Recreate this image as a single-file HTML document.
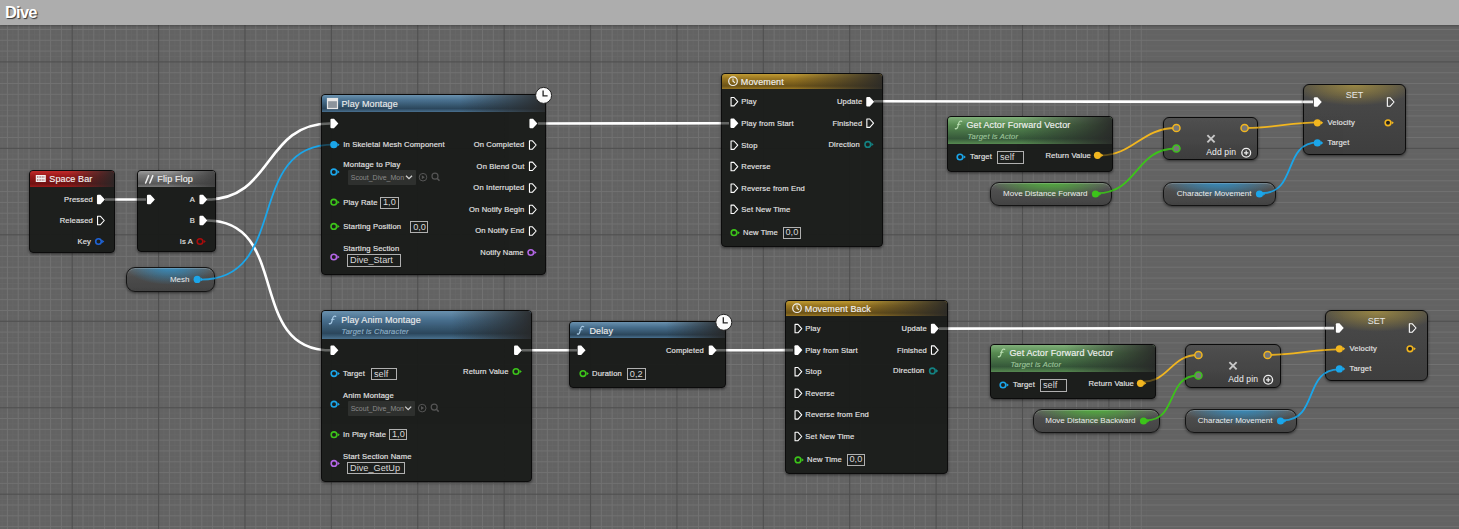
<!DOCTYPE html>
<html><head><meta charset="utf-8"><style>
*{margin:0;padding:0;box-sizing:border-box}
html,body{width:1459px;height:529px;overflow:hidden}
body{position:relative;background:#5c5c5c;font-family:"Liberation Sans", sans-serif;}
#bar{position:absolute;left:0;top:0;width:1459px;height:25px;background:#adadad;box-shadow:0 1px 2px rgba(0,0,0,0.25);}
#bar span{position:absolute;left:5px;top:3px;font-size:16.5px;font-weight:bold;color:#fff;text-shadow:1px 1px 1px #333;letter-spacing:-0.8px}
.node{position:absolute;border-radius:4px;background:rgba(27,29,27,0.97);border:1px solid #0c0c0c;box-shadow:0 1px 3px rgba(0,0,0,0.55);overflow:hidden}
.var{position:absolute;border-radius:9px;border:1px solid #141414;box-shadow:0 1px 3px rgba(0,0,0,0.55),inset 0 1px 0 rgba(255,255,255,0.18);overflow:hidden}
.cmp{border-radius:6px}
.hdr{position:absolute;left:0;top:0;right:0}
.t{position:absolute;white-space:nowrap;font-family:"Liberation Sans", sans-serif;line-height:1.15}
.box{position:absolute;border:1px solid #b0b0b0;color:#d8d8d8;padding-left:2px;white-space:nowrap;font-family:"Liberation Sans", sans-serif;overflow:hidden}
.drop{position:absolute;background:#2e302e;color:#8a8a8a;font-size:7px;padding-left:3px;white-space:nowrap;overflow:hidden;border-radius:1px}
svg{position:absolute;left:0;top:0}
</style></head><body>
<svg width="1459" height="529"><rect x="0" y="24" width="1459" height="505" fill="#636363"/><rect x="1.51" y="24" width="1" height="505" fill="#676767"/><rect x="12.31" y="24" width="1" height="505" fill="#676767"/><rect x="23.11" y="24" width="1" height="505" fill="#676767"/><rect x="33.90" y="24" width="1" height="505" fill="#676767"/><rect x="44.70" y="24" width="1" height="505" fill="#676767"/><rect x="55.50" y="24" width="1" height="505" fill="#676767"/><rect x="66.30" y="24" width="1" height="505" fill="#676767"/><rect x="77.10" y="24" width="1" height="505" fill="#676767"/><rect x="87.90" y="24" width="1" height="505" fill="#676767"/><rect x="98.70" y="24" width="1" height="505" fill="#676767"/><rect x="109.50" y="24" width="1" height="505" fill="#676767"/><rect x="120.29" y="24" width="1" height="505" fill="#676767"/><rect x="131.09" y="24" width="1" height="505" fill="#676767"/><rect x="141.89" y="24" width="1" height="505" fill="#676767"/><rect x="152.69" y="24" width="1" height="505" fill="#676767"/><rect x="163.49" y="24" width="1" height="505" fill="#676767"/><rect x="174.29" y="24" width="1" height="505" fill="#676767"/><rect x="185.09" y="24" width="1" height="505" fill="#676767"/><rect x="195.89" y="24" width="1" height="505" fill="#676767"/><rect x="206.68" y="24" width="1" height="505" fill="#676767"/><rect x="217.48" y="24" width="1" height="505" fill="#676767"/><rect x="228.28" y="24" width="1" height="505" fill="#676767"/><rect x="239.08" y="24" width="1" height="505" fill="#676767"/><rect x="249.88" y="24" width="1" height="505" fill="#676767"/><rect x="260.68" y="24" width="1" height="505" fill="#676767"/><rect x="271.48" y="24" width="1" height="505" fill="#676767"/><rect x="282.28" y="24" width="1" height="505" fill="#676767"/><rect x="293.07" y="24" width="1" height="505" fill="#676767"/><rect x="303.87" y="24" width="1" height="505" fill="#676767"/><rect x="314.67" y="24" width="1" height="505" fill="#676767"/><rect x="325.47" y="24" width="1" height="505" fill="#676767"/><rect x="336.27" y="24" width="1" height="505" fill="#676767"/><rect x="347.07" y="24" width="1" height="505" fill="#676767"/><rect x="357.87" y="24" width="1" height="505" fill="#676767"/><rect x="368.67" y="24" width="1" height="505" fill="#676767"/><rect x="379.46" y="24" width="1" height="505" fill="#676767"/><rect x="390.26" y="24" width="1" height="505" fill="#676767"/><rect x="401.06" y="24" width="1" height="505" fill="#676767"/><rect x="411.86" y="24" width="1" height="505" fill="#676767"/><rect x="422.66" y="24" width="1" height="505" fill="#676767"/><rect x="433.46" y="24" width="1" height="505" fill="#676767"/><rect x="444.26" y="24" width="1" height="505" fill="#676767"/><rect x="455.06" y="24" width="1" height="505" fill="#676767"/><rect x="465.85" y="24" width="1" height="505" fill="#676767"/><rect x="476.65" y="24" width="1" height="505" fill="#676767"/><rect x="487.45" y="24" width="1" height="505" fill="#676767"/><rect x="498.25" y="24" width="1" height="505" fill="#676767"/><rect x="509.05" y="24" width="1" height="505" fill="#676767"/><rect x="519.85" y="24" width="1" height="505" fill="#676767"/><rect x="530.65" y="24" width="1" height="505" fill="#676767"/><rect x="541.45" y="24" width="1" height="505" fill="#676767"/><rect x="552.24" y="24" width="1" height="505" fill="#676767"/><rect x="563.04" y="24" width="1" height="505" fill="#676767"/><rect x="573.84" y="24" width="1" height="505" fill="#676767"/><rect x="584.64" y="24" width="1" height="505" fill="#676767"/><rect x="595.44" y="24" width="1" height="505" fill="#676767"/><rect x="606.24" y="24" width="1" height="505" fill="#676767"/><rect x="617.04" y="24" width="1" height="505" fill="#676767"/><rect x="627.84" y="24" width="1" height="505" fill="#676767"/><rect x="638.63" y="24" width="1" height="505" fill="#676767"/><rect x="649.43" y="24" width="1" height="505" fill="#676767"/><rect x="660.23" y="24" width="1" height="505" fill="#676767"/><rect x="671.03" y="24" width="1" height="505" fill="#676767"/><rect x="681.83" y="24" width="1" height="505" fill="#676767"/><rect x="692.63" y="24" width="1" height="505" fill="#676767"/><rect x="703.43" y="24" width="1" height="505" fill="#676767"/><rect x="714.23" y="24" width="1" height="505" fill="#676767"/><rect x="725.02" y="24" width="1" height="505" fill="#676767"/><rect x="735.82" y="24" width="1" height="505" fill="#676767"/><rect x="746.62" y="24" width="1" height="505" fill="#676767"/><rect x="757.42" y="24" width="1" height="505" fill="#676767"/><rect x="768.22" y="24" width="1" height="505" fill="#676767"/><rect x="779.02" y="24" width="1" height="505" fill="#676767"/><rect x="789.82" y="24" width="1" height="505" fill="#676767"/><rect x="800.62" y="24" width="1" height="505" fill="#676767"/><rect x="811.41" y="24" width="1" height="505" fill="#676767"/><rect x="822.21" y="24" width="1" height="505" fill="#676767"/><rect x="833.01" y="24" width="1" height="505" fill="#676767"/><rect x="843.81" y="24" width="1" height="505" fill="#676767"/><rect x="854.61" y="24" width="1" height="505" fill="#676767"/><rect x="865.41" y="24" width="1" height="505" fill="#676767"/><rect x="876.21" y="24" width="1" height="505" fill="#676767"/><rect x="887.01" y="24" width="1" height="505" fill="#676767"/><rect x="897.80" y="24" width="1" height="505" fill="#676767"/><rect x="908.60" y="24" width="1" height="505" fill="#676767"/><rect x="919.40" y="24" width="1" height="505" fill="#676767"/><rect x="930.20" y="24" width="1" height="505" fill="#676767"/><rect x="941.00" y="24" width="1" height="505" fill="#676767"/><rect x="951.80" y="24" width="1" height="505" fill="#676767"/><rect x="962.60" y="24" width="1" height="505" fill="#676767"/><rect x="973.40" y="24" width="1" height="505" fill="#676767"/><rect x="984.19" y="24" width="1" height="505" fill="#676767"/><rect x="994.99" y="24" width="1" height="505" fill="#676767"/><rect x="1005.79" y="24" width="1" height="505" fill="#676767"/><rect x="1016.59" y="24" width="1" height="505" fill="#676767"/><rect x="1027.39" y="24" width="1" height="505" fill="#676767"/><rect x="1038.19" y="24" width="1" height="505" fill="#676767"/><rect x="1048.99" y="24" width="1" height="505" fill="#676767"/><rect x="1059.79" y="24" width="1" height="505" fill="#676767"/><rect x="1070.58" y="24" width="1" height="505" fill="#676767"/><rect x="1081.38" y="24" width="1" height="505" fill="#676767"/><rect x="1092.18" y="24" width="1" height="505" fill="#676767"/><rect x="1102.98" y="24" width="1" height="505" fill="#676767"/><rect x="1113.78" y="24" width="1" height="505" fill="#676767"/><rect x="1124.58" y="24" width="1" height="505" fill="#676767"/><rect x="1135.38" y="24" width="1" height="505" fill="#676767"/><rect x="1146.18" y="24" width="1" height="505" fill="#676767"/><rect x="0" y="23.57" width="1459" height="1" fill="#676767"/><rect x="0" y="34.38" width="1459" height="1" fill="#676767"/><rect x="0" y="45.19" width="1459" height="1" fill="#676767"/><rect x="0" y="56.00" width="1459" height="1" fill="#676767"/><rect x="0" y="66.80" width="1459" height="1" fill="#676767"/><rect x="0" y="77.61" width="1459" height="1" fill="#676767"/><rect x="0" y="88.42" width="1459" height="1" fill="#676767"/><rect x="0" y="99.23" width="1459" height="1" fill="#676767"/><rect x="0" y="110.03" width="1459" height="1" fill="#676767"/><rect x="0" y="120.84" width="1459" height="1" fill="#676767"/><rect x="0" y="131.65" width="1459" height="1" fill="#676767"/><rect x="0" y="142.46" width="1459" height="1" fill="#676767"/><rect x="0" y="153.26" width="1459" height="1" fill="#676767"/><rect x="0" y="164.07" width="1459" height="1" fill="#676767"/><rect x="0" y="174.88" width="1459" height="1" fill="#676767"/><rect x="0" y="185.69" width="1459" height="1" fill="#676767"/><rect x="0" y="196.49" width="1459" height="1" fill="#676767"/><rect x="0" y="207.30" width="1459" height="1" fill="#676767"/><rect x="0" y="218.11" width="1459" height="1" fill="#676767"/><rect x="0" y="228.92" width="1459" height="1" fill="#676767"/><rect x="0" y="239.72" width="1459" height="1" fill="#676767"/><rect x="0" y="250.53" width="1459" height="1" fill="#676767"/><rect x="0" y="261.34" width="1459" height="1" fill="#676767"/><rect x="0" y="272.15" width="1459" height="1" fill="#676767"/><rect x="0" y="282.95" width="1459" height="1" fill="#676767"/><rect x="0" y="293.76" width="1459" height="1" fill="#676767"/><rect x="0" y="304.57" width="1459" height="1" fill="#676767"/><rect x="0" y="315.38" width="1459" height="1" fill="#676767"/><rect x="0" y="326.18" width="1459" height="1" fill="#676767"/><rect x="0" y="336.99" width="1459" height="1" fill="#676767"/><rect x="0" y="347.80" width="1459" height="1" fill="#676767"/><rect x="0" y="358.61" width="1459" height="1" fill="#676767"/><rect x="0" y="369.41" width="1459" height="1" fill="#676767"/><rect x="0" y="380.22" width="1459" height="1" fill="#676767"/><rect x="0" y="391.03" width="1459" height="1" fill="#676767"/><rect x="0" y="401.84" width="1459" height="1" fill="#676767"/><rect x="0" y="412.64" width="1459" height="1" fill="#676767"/><rect x="0" y="423.45" width="1459" height="1" fill="#676767"/><rect x="0" y="434.26" width="1459" height="1" fill="#676767"/><rect x="0" y="445.07" width="1459" height="1" fill="#676767"/><rect x="0" y="455.87" width="1459" height="1" fill="#676767"/><rect x="0" y="466.68" width="1459" height="1" fill="#676767"/><rect x="0" y="477.49" width="1459" height="1" fill="#676767"/><rect x="0" y="488.30" width="1459" height="1" fill="#676767"/><rect x="0" y="499.10" width="1459" height="1" fill="#676767"/><rect x="0" y="509.91" width="1459" height="1" fill="#676767"/><rect x="0" y="520.72" width="1459" height="1" fill="#676767"/><rect x="6.91" y="24" width="1" height="505" fill="#727272"/><rect x="17.71" y="24" width="1" height="505" fill="#727272"/><rect x="28.51" y="24" width="1" height="505" fill="#727272"/><rect x="39.30" y="24" width="1" height="505" fill="#727272"/><rect x="50.10" y="24" width="1" height="505" fill="#727272"/><rect x="60.90" y="24" width="1" height="505" fill="#727272"/><rect x="82.50" y="24" width="1" height="505" fill="#727272"/><rect x="93.30" y="24" width="1" height="505" fill="#727272"/><rect x="104.10" y="24" width="1" height="505" fill="#727272"/><rect x="114.90" y="24" width="1" height="505" fill="#727272"/><rect x="125.69" y="24" width="1" height="505" fill="#727272"/><rect x="136.49" y="24" width="1" height="505" fill="#727272"/><rect x="147.29" y="24" width="1" height="505" fill="#727272"/><rect x="168.89" y="24" width="1" height="505" fill="#727272"/><rect x="179.69" y="24" width="1" height="505" fill="#727272"/><rect x="190.49" y="24" width="1" height="505" fill="#727272"/><rect x="201.29" y="24" width="1" height="505" fill="#727272"/><rect x="212.08" y="24" width="1" height="505" fill="#727272"/><rect x="222.88" y="24" width="1" height="505" fill="#727272"/><rect x="233.68" y="24" width="1" height="505" fill="#727272"/><rect x="255.28" y="24" width="1" height="505" fill="#727272"/><rect x="266.08" y="24" width="1" height="505" fill="#727272"/><rect x="276.88" y="24" width="1" height="505" fill="#727272"/><rect x="287.68" y="24" width="1" height="505" fill="#727272"/><rect x="298.47" y="24" width="1" height="505" fill="#727272"/><rect x="309.27" y="24" width="1" height="505" fill="#727272"/><rect x="320.07" y="24" width="1" height="505" fill="#727272"/><rect x="341.67" y="24" width="1" height="505" fill="#727272"/><rect x="352.47" y="24" width="1" height="505" fill="#727272"/><rect x="363.27" y="24" width="1" height="505" fill="#727272"/><rect x="374.06" y="24" width="1" height="505" fill="#727272"/><rect x="384.86" y="24" width="1" height="505" fill="#727272"/><rect x="395.66" y="24" width="1" height="505" fill="#727272"/><rect x="406.46" y="24" width="1" height="505" fill="#727272"/><rect x="428.06" y="24" width="1" height="505" fill="#727272"/><rect x="438.86" y="24" width="1" height="505" fill="#727272"/><rect x="449.66" y="24" width="1" height="505" fill="#727272"/><rect x="460.45" y="24" width="1" height="505" fill="#727272"/><rect x="471.25" y="24" width="1" height="505" fill="#727272"/><rect x="482.05" y="24" width="1" height="505" fill="#727272"/><rect x="492.85" y="24" width="1" height="505" fill="#727272"/><rect x="514.45" y="24" width="1" height="505" fill="#727272"/><rect x="525.25" y="24" width="1" height="505" fill="#727272"/><rect x="536.05" y="24" width="1" height="505" fill="#727272"/><rect x="546.85" y="24" width="1" height="505" fill="#727272"/><rect x="557.64" y="24" width="1" height="505" fill="#727272"/><rect x="568.44" y="24" width="1" height="505" fill="#727272"/><rect x="579.24" y="24" width="1" height="505" fill="#727272"/><rect x="600.84" y="24" width="1" height="505" fill="#727272"/><rect x="611.64" y="24" width="1" height="505" fill="#727272"/><rect x="622.44" y="24" width="1" height="505" fill="#727272"/><rect x="633.24" y="24" width="1" height="505" fill="#727272"/><rect x="644.03" y="24" width="1" height="505" fill="#727272"/><rect x="654.83" y="24" width="1" height="505" fill="#727272"/><rect x="665.63" y="24" width="1" height="505" fill="#727272"/><rect x="687.23" y="24" width="1" height="505" fill="#727272"/><rect x="698.03" y="24" width="1" height="505" fill="#727272"/><rect x="708.83" y="24" width="1" height="505" fill="#727272"/><rect x="719.62" y="24" width="1" height="505" fill="#727272"/><rect x="730.42" y="24" width="1" height="505" fill="#727272"/><rect x="741.22" y="24" width="1" height="505" fill="#727272"/><rect x="752.02" y="24" width="1" height="505" fill="#727272"/><rect x="773.62" y="24" width="1" height="505" fill="#727272"/><rect x="784.42" y="24" width="1" height="505" fill="#727272"/><rect x="795.22" y="24" width="1" height="505" fill="#727272"/><rect x="806.02" y="24" width="1" height="505" fill="#727272"/><rect x="816.81" y="24" width="1" height="505" fill="#727272"/><rect x="827.61" y="24" width="1" height="505" fill="#727272"/><rect x="838.41" y="24" width="1" height="505" fill="#727272"/><rect x="860.01" y="24" width="1" height="505" fill="#727272"/><rect x="870.81" y="24" width="1" height="505" fill="#727272"/><rect x="881.61" y="24" width="1" height="505" fill="#727272"/><rect x="892.41" y="24" width="1" height="505" fill="#727272"/><rect x="903.20" y="24" width="1" height="505" fill="#727272"/><rect x="914.00" y="24" width="1" height="505" fill="#727272"/><rect x="924.80" y="24" width="1" height="505" fill="#727272"/><rect x="946.40" y="24" width="1" height="505" fill="#727272"/><rect x="957.20" y="24" width="1" height="505" fill="#727272"/><rect x="968.00" y="24" width="1" height="505" fill="#727272"/><rect x="978.80" y="24" width="1" height="505" fill="#727272"/><rect x="989.59" y="24" width="1" height="505" fill="#727272"/><rect x="1000.39" y="24" width="1" height="505" fill="#727272"/><rect x="1011.19" y="24" width="1" height="505" fill="#727272"/><rect x="1032.79" y="24" width="1" height="505" fill="#727272"/><rect x="1043.59" y="24" width="1" height="505" fill="#727272"/><rect x="1054.39" y="24" width="1" height="505" fill="#727272"/><rect x="1065.18" y="24" width="1" height="505" fill="#727272"/><rect x="1075.98" y="24" width="1" height="505" fill="#727272"/><rect x="1086.78" y="24" width="1" height="505" fill="#727272"/><rect x="1097.58" y="24" width="1" height="505" fill="#727272"/><rect x="1119.18" y="24" width="1" height="505" fill="#727272"/><rect x="1129.98" y="24" width="1" height="505" fill="#727272"/><rect x="1140.78" y="24" width="1" height="505" fill="#727272"/><rect x="0" y="28.98" width="1459" height="1" fill="#727272"/><rect x="0" y="39.78" width="1459" height="1" fill="#727272"/><rect x="0" y="50.59" width="1459" height="1" fill="#727272"/><rect x="0" y="72.21" width="1459" height="1" fill="#727272"/><rect x="0" y="83.02" width="1459" height="1" fill="#727272"/><rect x="0" y="93.82" width="1459" height="1" fill="#727272"/><rect x="0" y="104.63" width="1459" height="1" fill="#727272"/><rect x="0" y="115.44" width="1459" height="1" fill="#727272"/><rect x="0" y="126.25" width="1459" height="1" fill="#727272"/><rect x="0" y="137.05" width="1459" height="1" fill="#727272"/><rect x="0" y="158.67" width="1459" height="1" fill="#727272"/><rect x="0" y="169.47" width="1459" height="1" fill="#727272"/><rect x="0" y="180.28" width="1459" height="1" fill="#727272"/><rect x="0" y="191.09" width="1459" height="1" fill="#727272"/><rect x="0" y="201.90" width="1459" height="1" fill="#727272"/><rect x="0" y="212.70" width="1459" height="1" fill="#727272"/><rect x="0" y="223.51" width="1459" height="1" fill="#727272"/><rect x="0" y="245.13" width="1459" height="1" fill="#727272"/><rect x="0" y="255.94" width="1459" height="1" fill="#727272"/><rect x="0" y="266.74" width="1459" height="1" fill="#727272"/><rect x="0" y="277.55" width="1459" height="1" fill="#727272"/><rect x="0" y="288.36" width="1459" height="1" fill="#727272"/><rect x="0" y="299.16" width="1459" height="1" fill="#727272"/><rect x="0" y="309.97" width="1459" height="1" fill="#727272"/><rect x="0" y="331.59" width="1459" height="1" fill="#727272"/><rect x="0" y="342.39" width="1459" height="1" fill="#727272"/><rect x="0" y="353.20" width="1459" height="1" fill="#727272"/><rect x="0" y="364.01" width="1459" height="1" fill="#727272"/><rect x="0" y="374.82" width="1459" height="1" fill="#727272"/><rect x="0" y="385.62" width="1459" height="1" fill="#727272"/><rect x="0" y="396.43" width="1459" height="1" fill="#727272"/><rect x="0" y="418.05" width="1459" height="1" fill="#727272"/><rect x="0" y="428.85" width="1459" height="1" fill="#727272"/><rect x="0" y="439.66" width="1459" height="1" fill="#727272"/><rect x="0" y="450.47" width="1459" height="1" fill="#727272"/><rect x="0" y="461.28" width="1459" height="1" fill="#727272"/><rect x="0" y="472.08" width="1459" height="1" fill="#727272"/><rect x="0" y="482.89" width="1459" height="1" fill="#727272"/><rect x="0" y="504.51" width="1459" height="1" fill="#727272"/><rect x="0" y="515.31" width="1459" height="1" fill="#727272"/><rect x="0" y="526.12" width="1459" height="1" fill="#727272"/><rect x="71.65" y="24" width="1.1" height="505" fill="#505050"/><rect x="158.04" y="24" width="1.1" height="505" fill="#505050"/><rect x="244.43" y="24" width="1.1" height="505" fill="#505050"/><rect x="330.82" y="24" width="1.1" height="505" fill="#505050"/><rect x="417.21" y="24" width="1.1" height="505" fill="#505050"/><rect x="503.60" y="24" width="1.1" height="505" fill="#505050"/><rect x="589.99" y="24" width="1.1" height="505" fill="#505050"/><rect x="676.38" y="24" width="1.1" height="505" fill="#505050"/><rect x="762.77" y="24" width="1.1" height="505" fill="#505050"/><rect x="849.16" y="24" width="1.1" height="505" fill="#505050"/><rect x="935.55" y="24" width="1.1" height="505" fill="#505050"/><rect x="1021.94" y="24" width="1.1" height="505" fill="#505050"/><rect x="1108.33" y="24" width="1.1" height="505" fill="#505050"/><rect x="0" y="61.35" width="1459" height="1.1" fill="#505050"/><rect x="0" y="147.81" width="1459" height="1.1" fill="#505050"/><rect x="0" y="234.27" width="1459" height="1.1" fill="#505050"/><rect x="0" y="320.73" width="1459" height="1.1" fill="#505050"/><rect x="0" y="407.19" width="1459" height="1.1" fill="#505050"/><rect x="0" y="493.65" width="1459" height="1.1" fill="#505050"/></svg>
<div id="bar"><span>Dive</span></div>
<svg width="1459" height="529"><path d="M105 199.5 C118.66666666666667 199.5 132.33333333333334 199.5 146 199.5" stroke="#ffffff" stroke-width="2.6" fill="none"/><path d="M207 199.5 C273.3333333333333 199.5 263.6666666666667 123.5 330 123.5" stroke="#ffffff" stroke-width="2.6" fill="none"/><path d="M207 220.5 C291.26666666666665 220.5 245.73333333333335 350.3 330 350.3" stroke="#ffffff" stroke-width="2.6" fill="none"/><path d="M538 123.5 C601.7666666666667 123.5 665.2333333333333 123.2 729 123.2" stroke="#ffffff" stroke-width="2.6" fill="none"/><path d="M522 350.3 C540.3333333333334 350.3 558.6666666666666 350.3 577 350.3" stroke="#ffffff" stroke-width="2.6" fill="none"/><path d="M716 350.3 C741.7333333333333 350.3 767.2666666666667 350.1 793 350.1" stroke="#ffffff" stroke-width="2.6" fill="none"/><path d="M874 101.3 C1020.5333333333333 101.3 1166.4666666666667 101.9 1313 101.9" stroke="#ffffff" stroke-width="2.6" fill="none"/><path d="M939 328.6 C1070.8333333333333 328.6 1202.1666666666667 328.1 1334 328.1" stroke="#ffffff" stroke-width="2.6" fill="none"/><path d="M201 279.6 C289.9666666666667 279.6 244.0333333333333 144.7 333 144.7" stroke="#1ba6ea" stroke-width="1.8" fill="none"/><path d="M1099 155.6 C1133.8666666666666 155.6 1141.1333333333334 128 1176 128" stroke="#f2b61f" stroke-width="1.8" fill="none"/><path d="M1097 193.2 C1138.2333333333333 193.2 1134.7666666666667 148.5 1176 148.5" stroke="#3cc41a" stroke-width="1.8" fill="none"/><path d="M1247 128 C1272.5666666666666 128 1292.4333333333334 122.3 1318 122.3" stroke="#f2b61f" stroke-width="1.8" fill="none"/><path d="M1262 193.2 C1297.6 193.2 1282.4 142.4 1318 142.4" stroke="#1ba6ea" stroke-width="1.8" fill="none"/><path d="M1142 381.8 C1169.6 381.8 1170.4 355 1198 355" stroke="#f2b61f" stroke-width="1.8" fill="none"/><path d="M1146 420.4 C1178.3 420.4 1165.7 375.5 1198 375.5" stroke="#3cc41a" stroke-width="1.8" fill="none"/><path d="M1268 355 C1293.5666666666666 355 1313.4333333333334 349.3 1339 349.3" stroke="#f2b61f" stroke-width="1.8" fill="none"/><path d="M1283 420.4 C1318.6666666666667 420.4 1303.3333333333333 369.4 1339 369.4" stroke="#1ba6ea" stroke-width="1.8" fill="none"/></svg>
<div class="node" style="left:29px;top:170px;width:86px;height:83px;"><div class="hdr" style="height:16px;background:linear-gradient(90deg,rgba(40,40,40,0) 45%,rgba(40,40,40,0.92) 100%),linear-gradient(180deg,#c22a2a 0%,#9c1a1a 30%,#6e1212 80%,#9c1a1a 100%);"></div></div><div class="node" style="left:137px;top:170px;width:79px;height:82px;"><div class="hdr" style="height:16px;background:linear-gradient(90deg,rgba(40,40,40,0) 40%,rgba(60,60,60,0.85) 100%),linear-gradient(180deg,#9a9a9a 0%,#7a7a7a 30%,#585858 80%,#7a7a7a 100%);"></div></div><div class="var" style="left:126px;top:267px;width:89px;height:25px;background:radial-gradient(ellipse 58% 95% at 50% -12%,rgba(45,150,210,0.7) 0%,rgba(45,150,210,0.7) 20%,rgba(0,0,0,0) 90%),linear-gradient(180deg,#626262 0%,#4e4e4e 35%,#434343 100%);"></div><div class="node" style="left:321px;top:94px;width:225px;height:181px;"><div class="hdr" style="height:17px;background:linear-gradient(90deg,rgba(40,40,40,0) 62%,rgba(40,40,40,0.92) 100%),linear-gradient(180deg,#6a91ae 0%,#4a7190 30%,#2c475c 80%,#4a7190 100%);"></div></div><div class="node" style="left:321px;top:310px;width:211px;height:172px;"><div class="hdr" style="height:27.5px;background:linear-gradient(90deg,rgba(40,40,40,0) 62%,rgba(40,40,40,0.92) 100%),linear-gradient(180deg,#6a91ae 0%,#4a7190 30%,#2c475c 80%,#4a7190 100%);"></div></div><div class="node" style="left:569px;top:321px;width:157px;height:67px;"><div class="hdr" style="height:15.8px;background:linear-gradient(90deg,rgba(40,40,40,0) 62%,rgba(40,40,40,0.92) 100%),linear-gradient(180deg,#6a91ae 0%,#4a7190 30%,#2c475c 80%,#4a7190 100%);"></div></div><div class="node" style="left:721px;top:73px;width:162px;height:174px;"><div class="hdr" style="height:15px;background:linear-gradient(90deg,rgba(40,40,40,0) 45%,rgba(40,40,40,0.92) 100%),linear-gradient(180deg,#bf9a32 0%,#9a7722 30%,#6c5318 80%,#9a7722 100%);"></div></div><div class="node" style="left:785px;top:300px;width:163px;height:174px;"><div class="hdr" style="height:15px;background:linear-gradient(90deg,rgba(40,40,40,0) 45%,rgba(40,40,40,0.92) 100%),linear-gradient(180deg,#bf9a32 0%,#9a7722 30%,#6c5318 80%,#9a7722 100%);"></div></div><div class="node" style="left:947px;top:116px;width:166px;height:56px;"><div class="hdr" style="height:27px;background:linear-gradient(90deg,rgba(40,40,40,0) 45%,rgba(40,40,40,0.92) 100%),linear-gradient(180deg,#80b07a 0%,#578a51 30%,#36583a 80%,#578a51 100%);"></div></div><div class="node cmp" style="left:1163px;top:117px;width:95px;height:43px;background:linear-gradient(180deg,#505050 0%,#3e3e3e 100%);"></div><div class="node cmp" style="left:1303px;top:84px;width:103px;height:71px;background:radial-gradient(ellipse 62% 30% at 50% 0%,rgba(205,175,65,0.6) 0%,rgba(190,160,55,0.32) 55%,rgba(0,0,0,0) 100%),linear-gradient(180deg,#4a4a4a 0%,#3e3e3e 100%);"></div><div class="var" style="left:990px;top:182px;width:122px;height:24px;background:radial-gradient(ellipse 58% 95% at 50% -12%,rgba(80,190,55,0.7) 0%,rgba(80,190,55,0.7) 20%,rgba(0,0,0,0) 90%),linear-gradient(180deg,#626262 0%,#4e4e4e 35%,#434343 100%);"></div><div class="var" style="left:1163px;top:182px;width:113px;height:24px;background:radial-gradient(ellipse 58% 95% at 50% -12%,rgba(45,150,210,0.7) 0%,rgba(45,150,210,0.7) 20%,rgba(0,0,0,0) 90%),linear-gradient(180deg,#626262 0%,#4e4e4e 35%,#434343 100%);"></div><div class="node" style="left:990px;top:344px;width:166px;height:55px;"><div class="hdr" style="height:27px;background:linear-gradient(90deg,rgba(40,40,40,0) 45%,rgba(40,40,40,0.92) 100%),linear-gradient(180deg,#80b07a 0%,#578a51 30%,#36583a 80%,#578a51 100%);"></div></div><div class="node cmp" style="left:1185px;top:344px;width:96px;height:44px;background:linear-gradient(180deg,#505050 0%,#3e3e3e 100%);"></div><div class="node cmp" style="left:1325px;top:310px;width:103px;height:71px;background:radial-gradient(ellipse 62% 30% at 50% 0%,rgba(205,175,65,0.6) 0%,rgba(190,160,55,0.32) 55%,rgba(0,0,0,0) 100%),linear-gradient(180deg,#4a4a4a 0%,#3e3e3e 100%);"></div><div class="var" style="left:1033px;top:409px;width:127px;height:24px;background:radial-gradient(ellipse 58% 95% at 50% -12%,rgba(80,190,55,0.7) 0%,rgba(80,190,55,0.7) 20%,rgba(0,0,0,0) 90%),linear-gradient(180deg,#626262 0%,#4e4e4e 35%,#434343 100%);"></div><div class="var" style="left:1185px;top:409px;width:112px;height:24px;background:radial-gradient(ellipse 58% 95% at 50% -12%,rgba(45,150,210,0.7) 0%,rgba(45,150,210,0.7) 20%,rgba(0,0,0,0) 90%),linear-gradient(180deg,#626262 0%,#4e4e4e 35%,#434343 100%);"></div>
<svg width="1459" height="529"><defs><clipPath id="cc"><rect x="126" y="267" width="89" height="25"/><rect x="1163" y="117" width="95" height="43"/><rect x="1303" y="84" width="103" height="71"/><rect x="990" y="182" width="122" height="24"/><rect x="1163" y="182" width="113" height="24"/><rect x="1185" y="344" width="96" height="44"/><rect x="1325" y="310" width="103" height="71"/><rect x="1033" y="409" width="127" height="24"/><rect x="1185" y="409" width="112" height="24"/></clipPath><clipPath id="cd"><rect x="29" y="170" width="86" height="83"/><rect x="137" y="170" width="79" height="82"/><rect x="321" y="94" width="225" height="181"/><rect x="321" y="310" width="211" height="172"/><rect x="569" y="321" width="157" height="67"/><rect x="721" y="73" width="162" height="174"/><rect x="785" y="300" width="163" height="174"/><rect x="947" y="116" width="166" height="56"/><rect x="990" y="344" width="166" height="55"/></clipPath></defs><g clip-path="url(#cc)" opacity="0.9"><path d="M105 199.5 C118.66666666666667 199.5 132.33333333333334 199.5 146 199.5" stroke="#ffffff" stroke-width="2.6" fill="none"/><path d="M207 199.5 C273.3333333333333 199.5 263.6666666666667 123.5 330 123.5" stroke="#ffffff" stroke-width="2.6" fill="none"/><path d="M207 220.5 C291.26666666666665 220.5 245.73333333333335 350.3 330 350.3" stroke="#ffffff" stroke-width="2.6" fill="none"/><path d="M538 123.5 C601.7666666666667 123.5 665.2333333333333 123.2 729 123.2" stroke="#ffffff" stroke-width="2.6" fill="none"/><path d="M522 350.3 C540.3333333333334 350.3 558.6666666666666 350.3 577 350.3" stroke="#ffffff" stroke-width="2.6" fill="none"/><path d="M716 350.3 C741.7333333333333 350.3 767.2666666666667 350.1 793 350.1" stroke="#ffffff" stroke-width="2.6" fill="none"/><path d="M874 101.3 C1020.5333333333333 101.3 1166.4666666666667 101.9 1313 101.9" stroke="#ffffff" stroke-width="2.6" fill="none"/><path d="M939 328.6 C1070.8333333333333 328.6 1202.1666666666667 328.1 1334 328.1" stroke="#ffffff" stroke-width="2.6" fill="none"/><path d="M201 279.6 C289.9666666666667 279.6 244.0333333333333 144.7 333 144.7" stroke="#1ba6ea" stroke-width="1.8" fill="none"/><path d="M1099 155.6 C1133.8666666666666 155.6 1141.1333333333334 128 1176 128" stroke="#f2b61f" stroke-width="1.8" fill="none"/><path d="M1097 193.2 C1138.2333333333333 193.2 1134.7666666666667 148.5 1176 148.5" stroke="#3cc41a" stroke-width="1.8" fill="none"/><path d="M1247 128 C1272.5666666666666 128 1292.4333333333334 122.3 1318 122.3" stroke="#f2b61f" stroke-width="1.8" fill="none"/><path d="M1262 193.2 C1297.6 193.2 1282.4 142.4 1318 142.4" stroke="#1ba6ea" stroke-width="1.8" fill="none"/><path d="M1142 381.8 C1169.6 381.8 1170.4 355 1198 355" stroke="#f2b61f" stroke-width="1.8" fill="none"/><path d="M1146 420.4 C1178.3 420.4 1165.7 375.5 1198 375.5" stroke="#3cc41a" stroke-width="1.8" fill="none"/><path d="M1268 355 C1293.5666666666666 355 1313.4333333333334 349.3 1339 349.3" stroke="#f2b61f" stroke-width="1.8" fill="none"/><path d="M1283 420.4 C1318.6666666666667 420.4 1303.3333333333333 369.4 1339 369.4" stroke="#1ba6ea" stroke-width="1.8" fill="none"/></g><g clip-path="url(#cd)" opacity="0.3"><path d="M105 199.5 C118.66666666666667 199.5 132.33333333333334 199.5 146 199.5" stroke="#ffffff" stroke-width="2.6" fill="none"/><path d="M207 199.5 C273.3333333333333 199.5 263.6666666666667 123.5 330 123.5" stroke="#ffffff" stroke-width="2.6" fill="none"/><path d="M207 220.5 C291.26666666666665 220.5 245.73333333333335 350.3 330 350.3" stroke="#ffffff" stroke-width="2.6" fill="none"/><path d="M538 123.5 C601.7666666666667 123.5 665.2333333333333 123.2 729 123.2" stroke="#ffffff" stroke-width="2.6" fill="none"/><path d="M522 350.3 C540.3333333333334 350.3 558.6666666666666 350.3 577 350.3" stroke="#ffffff" stroke-width="2.6" fill="none"/><path d="M716 350.3 C741.7333333333333 350.3 767.2666666666667 350.1 793 350.1" stroke="#ffffff" stroke-width="2.6" fill="none"/><path d="M874 101.3 C1020.5333333333333 101.3 1166.4666666666667 101.9 1313 101.9" stroke="#ffffff" stroke-width="2.6" fill="none"/><path d="M939 328.6 C1070.8333333333333 328.6 1202.1666666666667 328.1 1334 328.1" stroke="#ffffff" stroke-width="2.6" fill="none"/><path d="M201 279.6 C289.9666666666667 279.6 244.0333333333333 144.7 333 144.7" stroke="#1ba6ea" stroke-width="1.8" fill="none"/><path d="M1099 155.6 C1133.8666666666666 155.6 1141.1333333333334 128 1176 128" stroke="#f2b61f" stroke-width="1.8" fill="none"/><path d="M1097 193.2 C1138.2333333333333 193.2 1134.7666666666667 148.5 1176 148.5" stroke="#3cc41a" stroke-width="1.8" fill="none"/><path d="M1247 128 C1272.5666666666666 128 1292.4333333333334 122.3 1318 122.3" stroke="#f2b61f" stroke-width="1.8" fill="none"/><path d="M1262 193.2 C1297.6 193.2 1282.4 142.4 1318 142.4" stroke="#1ba6ea" stroke-width="1.8" fill="none"/><path d="M1142 381.8 C1169.6 381.8 1170.4 355 1198 355" stroke="#f2b61f" stroke-width="1.8" fill="none"/><path d="M1146 420.4 C1178.3 420.4 1165.7 375.5 1198 375.5" stroke="#3cc41a" stroke-width="1.8" fill="none"/><path d="M1268 355 C1293.5666666666666 355 1313.4333333333334 349.3 1339 349.3" stroke="#f2b61f" stroke-width="1.8" fill="none"/><path d="M1283 420.4 C1318.6666666666667 420.4 1303.3333333333333 369.4 1339 369.4" stroke="#1ba6ea" stroke-width="1.8" fill="none"/></g></svg>
<div class="t" style="left:49.3px;top:173.9px;font-size:9.0px;color:#f2f2f2;font-weight:normal;letter-spacing:0.12px;-webkit-text-stroke:0.15px currentColor;">Space Bar</div><div class="t" style="right:1366.0px;top:195.9px;font-size:7.6px;color:#e4e4e4;font-weight:normal;letter-spacing:0.15px;-webkit-text-stroke:0.15px currentColor;">Pressed</div><div class="t" style="right:1366.0px;top:216.9px;font-size:7.6px;color:#e4e4e4;font-weight:normal;letter-spacing:0.15px;-webkit-text-stroke:0.15px currentColor;">Released</div><div class="t" style="right:1368.0px;top:237.9px;font-size:7.6px;color:#e4e4e4;font-weight:normal;letter-spacing:0.15px;-webkit-text-stroke:0.15px currentColor;">Key</div><div class="t" style="left:157.3px;top:173.9px;font-size:9.0px;color:#f0f0f0;font-weight:normal;letter-spacing:0.12px;-webkit-text-stroke:0.15px currentColor;">Flip Flop</div><div class="t" style="right:1264.0px;top:195.9px;font-size:7.6px;color:#e4e4e4;font-weight:normal;letter-spacing:0.15px;-webkit-text-stroke:0.15px currentColor;">A</div><div class="t" style="right:1264.0px;top:216.9px;font-size:7.6px;color:#e4e4e4;font-weight:normal;letter-spacing:0.15px;-webkit-text-stroke:0.15px currentColor;">B</div><div class="t" style="right:1266.0px;top:237.9px;font-size:7.6px;color:#e4e4e4;font-weight:normal;letter-spacing:0.15px;-webkit-text-stroke:0.15px currentColor;">Is A</div><div class="t" style="right:1269.5px;top:275.4px;font-size:8px;color:#ececec;font-weight:normal;">Mesh</div><div class="t" style="left:341.4px;top:99.3px;font-size:9.0px;color:#eaeaea;font-weight:normal;letter-spacing:0.12px;-webkit-text-stroke:0.15px currentColor;">Play Montage</div><div class="t" style="left:343.3px;top:141.1px;font-size:7.6px;color:#e4e4e4;font-weight:normal;letter-spacing:0.15px;-webkit-text-stroke:0.15px currentColor;">In Skeletal Mesh Component</div><div class="t" style="left:343.3px;top:160.6px;font-size:7.6px;color:#e4e4e4;font-weight:normal;letter-spacing:0.15px;-webkit-text-stroke:0.15px currentColor;">Montage to Play</div><div class="drop" style="left:347.8px;top:169.6px;width:68.2px;height:15.2px;line-height:15.2px">Scout_Dive_Mon</div><div class="t" style="left:343.3px;top:198.6px;font-size:7.6px;color:#e4e4e4;font-weight:normal;letter-spacing:0.15px;-webkit-text-stroke:0.15px currentColor;">Play Rate</div><div class="box" style="left:380.0px;top:196.8px;width:18.9px;height:11.8px;font-size:9.2px;line-height:9.8px">1,0</div><div class="t" style="left:343.3px;top:222.8px;font-size:7.6px;color:#e4e4e4;font-weight:normal;letter-spacing:0.15px;-webkit-text-stroke:0.15px currentColor;">Starting Position</div><div class="box" style="left:410.2px;top:220.5px;width:18.2px;height:12.0px;font-size:9.2px;line-height:10.0px">0,0</div><div class="t" style="left:343.3px;top:245.4px;font-size:7.6px;color:#e4e4e4;font-weight:normal;letter-spacing:0.15px;-webkit-text-stroke:0.15px currentColor;">Starting Section</div><div class="box" style="left:347.0px;top:254.0px;width:53.8px;height:12.5px;font-size:9.2px;line-height:10.5px">Dive_Start</div><div class="t" style="right:934.6px;top:141.4px;font-size:7.6px;color:#e4e4e4;font-weight:normal;letter-spacing:0.15px;-webkit-text-stroke:0.15px currentColor;">On Completed</div><div class="t" style="right:934.6px;top:162.7px;font-size:7.6px;color:#e4e4e4;font-weight:normal;letter-spacing:0.15px;-webkit-text-stroke:0.15px currentColor;">On Blend Out</div><div class="t" style="right:934.6px;top:184.4px;font-size:7.6px;color:#e4e4e4;font-weight:normal;letter-spacing:0.15px;-webkit-text-stroke:0.15px currentColor;">On Interrupted</div><div class="t" style="right:934.6px;top:205.9px;font-size:7.6px;color:#e4e4e4;font-weight:normal;letter-spacing:0.15px;-webkit-text-stroke:0.15px currentColor;">On Notify Begin</div><div class="t" style="right:934.6px;top:227.4px;font-size:7.6px;color:#e4e4e4;font-weight:normal;letter-spacing:0.15px;-webkit-text-stroke:0.15px currentColor;">On Notify End</div><div class="t" style="right:935.3px;top:248.9px;font-size:7.6px;color:#e4e4e4;font-weight:normal;letter-spacing:0.15px;-webkit-text-stroke:0.15px currentColor;">Notify Name</div><div class="t" style="left:341.2px;top:314.8px;font-size:9.0px;color:#eaeaea;font-weight:normal;letter-spacing:0.12px;-webkit-text-stroke:0.15px currentColor;">Play Anim Montage</div><div class="t" style="left:341.6px;top:328.0px;font-size:7.6px;color:#8fb0c8;font-weight:normal;letter-spacing:0.15px;-webkit-text-stroke:0.15px currentColor;font-style:italic;">Target is Character</div><div class="t" style="left:343.0px;top:370.0px;font-size:7.6px;color:#e4e4e4;font-weight:normal;letter-spacing:0.15px;-webkit-text-stroke:0.15px currentColor;">Target</div><div class="box" style="left:371.0px;top:367.5px;width:26.3px;height:12.6px;font-size:9.2px;line-height:10.6px">self</div><div class="t" style="right:950.4px;top:367.9px;font-size:7.6px;color:#e4e4e4;font-weight:normal;letter-spacing:0.15px;-webkit-text-stroke:0.15px currentColor;">Return Value</div><div class="t" style="left:343.0px;top:391.9px;font-size:7.6px;color:#e4e4e4;font-weight:normal;letter-spacing:0.15px;-webkit-text-stroke:0.15px currentColor;">Anim Montage</div><div class="drop" style="left:347.7px;top:400.6px;width:67.5px;height:15.1px;line-height:15.1px">Scout_Dive_Mon</div><div class="t" style="left:343.0px;top:431.1px;font-size:7.6px;color:#e4e4e4;font-weight:normal;letter-spacing:0.15px;-webkit-text-stroke:0.15px currentColor;">In Play Rate</div><div class="box" style="left:389.0px;top:428.6px;width:18.0px;height:11.9px;font-size:9.2px;line-height:9.9px">1,0</div><div class="t" style="left:343.0px;top:453.0px;font-size:7.6px;color:#e4e4e4;font-weight:normal;letter-spacing:0.15px;-webkit-text-stroke:0.15px currentColor;">Start Section Name</div><div class="box" style="left:347.0px;top:461.6px;width:58.2px;height:12.6px;font-size:9.2px;line-height:10.6px">Dive_GetUp</div><div class="t" style="left:589.5px;top:326.3px;font-size:9.0px;color:#eaeaea;font-weight:normal;letter-spacing:0.12px;-webkit-text-stroke:0.15px currentColor;">Delay</div><div class="t" style="right:755.0px;top:346.7px;font-size:7.6px;color:#e4e4e4;font-weight:normal;letter-spacing:0.15px;-webkit-text-stroke:0.15px currentColor;">Completed</div><div class="t" style="left:592.0px;top:370.0px;font-size:7.6px;color:#e4e4e4;font-weight:normal;letter-spacing:0.15px;-webkit-text-stroke:0.15px currentColor;">Duration</div><div class="box" style="left:626.8px;top:367.5px;width:19.0px;height:12.2px;font-size:9.2px;line-height:10.2px">0,2</div><div class="t" style="left:740.8px;top:76.5px;font-size:9.0px;color:#f0f0f0;font-weight:normal;letter-spacing:0.12px;-webkit-text-stroke:0.15px currentColor;">Movement</div><div class="t" style="left:741.3px;top:98.1px;font-size:7.6px;color:#e4e4e4;font-weight:normal;letter-spacing:0.15px;-webkit-text-stroke:0.15px currentColor;">Play</div><div class="t" style="left:741.3px;top:119.6px;font-size:7.6px;color:#e4e4e4;font-weight:normal;letter-spacing:0.15px;-webkit-text-stroke:0.15px currentColor;">Play from Start</div><div class="t" style="left:741.3px;top:141.6px;font-size:7.6px;color:#e4e4e4;font-weight:normal;letter-spacing:0.15px;-webkit-text-stroke:0.15px currentColor;">Stop</div><div class="t" style="left:741.3px;top:163.0px;font-size:7.6px;color:#e4e4e4;font-weight:normal;letter-spacing:0.15px;-webkit-text-stroke:0.15px currentColor;">Reverse</div><div class="t" style="left:741.3px;top:184.6px;font-size:7.6px;color:#e4e4e4;font-weight:normal;letter-spacing:0.15px;-webkit-text-stroke:0.15px currentColor;">Reverse from End</div><div class="t" style="left:741.3px;top:205.7px;font-size:7.6px;color:#e4e4e4;font-weight:normal;letter-spacing:0.15px;-webkit-text-stroke:0.15px currentColor;">Set New Time</div><div class="t" style="left:743.0px;top:229.1px;font-size:7.6px;color:#e4e4e4;font-weight:normal;letter-spacing:0.15px;-webkit-text-stroke:0.15px currentColor;">New Time</div><div class="box" style="left:782.5px;top:227.1px;width:18.0px;height:11.8px;font-size:9.2px;line-height:9.8px">0,0</div><div class="t" style="right:596.7px;top:98.1px;font-size:7.6px;color:#e4e4e4;font-weight:normal;letter-spacing:0.15px;-webkit-text-stroke:0.15px currentColor;">Update</div><div class="t" style="right:596.7px;top:119.6px;font-size:7.6px;color:#e4e4e4;font-weight:normal;letter-spacing:0.15px;-webkit-text-stroke:0.15px currentColor;">Finished</div><div class="t" style="right:599.2px;top:140.8px;font-size:7.6px;color:#e4e4e4;font-weight:normal;letter-spacing:0.15px;-webkit-text-stroke:0.15px currentColor;">Direction</div><div class="t" style="left:804.8px;top:303.5px;font-size:9.0px;color:#f0f0f0;font-weight:normal;letter-spacing:0.12px;-webkit-text-stroke:0.15px currentColor;">Movement Back</div><div class="t" style="left:805.3px;top:325.0px;font-size:7.6px;color:#e4e4e4;font-weight:normal;letter-spacing:0.15px;-webkit-text-stroke:0.15px currentColor;">Play</div><div class="t" style="left:805.3px;top:346.5px;font-size:7.6px;color:#e4e4e4;font-weight:normal;letter-spacing:0.15px;-webkit-text-stroke:0.15px currentColor;">Play from Start</div><div class="t" style="left:805.3px;top:368.1px;font-size:7.6px;color:#e4e4e4;font-weight:normal;letter-spacing:0.15px;-webkit-text-stroke:0.15px currentColor;">Stop</div><div class="t" style="left:805.3px;top:389.7px;font-size:7.6px;color:#e4e4e4;font-weight:normal;letter-spacing:0.15px;-webkit-text-stroke:0.15px currentColor;">Reverse</div><div class="t" style="left:805.3px;top:411.3px;font-size:7.6px;color:#e4e4e4;font-weight:normal;letter-spacing:0.15px;-webkit-text-stroke:0.15px currentColor;">Reverse from End</div><div class="t" style="left:805.3px;top:432.9px;font-size:7.6px;color:#e4e4e4;font-weight:normal;letter-spacing:0.15px;-webkit-text-stroke:0.15px currentColor;">Set New Time</div><div class="t" style="left:807.0px;top:456.3px;font-size:7.6px;color:#e4e4e4;font-weight:normal;letter-spacing:0.15px;-webkit-text-stroke:0.15px currentColor;">New Time</div><div class="box" style="left:846.5px;top:454.3px;width:18.0px;height:11.8px;font-size:9.2px;line-height:9.8px">0,0</div><div class="t" style="right:532.1px;top:325.0px;font-size:7.6px;color:#e4e4e4;font-weight:normal;letter-spacing:0.15px;-webkit-text-stroke:0.15px currentColor;">Update</div><div class="t" style="right:532.1px;top:346.5px;font-size:7.6px;color:#e4e4e4;font-weight:normal;letter-spacing:0.15px;-webkit-text-stroke:0.15px currentColor;">Finished</div><div class="t" style="right:534.6px;top:367.3px;font-size:7.6px;color:#e4e4e4;font-weight:normal;letter-spacing:0.15px;-webkit-text-stroke:0.15px currentColor;">Direction</div><div class="t" style="left:966.5px;top:120.4px;font-size:9.0px;color:#f0f0f0;font-weight:normal;letter-spacing:0.12px;-webkit-text-stroke:0.15px currentColor;">Get Actor Forward Vector</div><div class="t" style="left:967.5px;top:132.6px;font-size:7.6px;color:#9cc49a;font-weight:normal;letter-spacing:0.15px;-webkit-text-stroke:0.15px currentColor;font-style:italic;">Target is Actor</div><div class="t" style="left:970.0px;top:153.4px;font-size:7.6px;color:#e4e4e4;font-weight:normal;letter-spacing:0.15px;-webkit-text-stroke:0.15px currentColor;">Target</div><div class="box" style="left:997.0px;top:151.2px;width:27.0px;height:12.8px;font-size:9.2px;line-height:10.8px">self</div><div class="t" style="right:368.0px;top:151.7px;font-size:7.6px;color:#e4e4e4;font-weight:normal;letter-spacing:0.15px;-webkit-text-stroke:0.15px currentColor;">Return Value</div><div class="t" style="left:1206.2px;top:148.4px;font-size:8.6px;color:#f0f0f0;font-weight:normal;letter-spacing:0.1px;">Add pin</div><div class="t" style="left:1254.4px;width:200px;text-align:center;top:90.3px;font-size:9px;color:#e8e8e8;font-weight:normal;">SET</div><div class="t" style="left:1327.5px;top:119.2px;font-size:7.6px;color:#e4e4e4;font-weight:normal;letter-spacing:0.15px;-webkit-text-stroke:0.15px currentColor;">Velocity</div><div class="t" style="left:1327.5px;top:139.3px;font-size:7.6px;color:#e4e4e4;font-weight:normal;letter-spacing:0.15px;-webkit-text-stroke:0.15px currentColor;">Target</div><div class="t" style="right:371.5px;top:189.3px;font-size:8px;color:#ececec;font-weight:normal;">Move Distance Forward</div><div class="t" style="right:207.5px;top:189.3px;font-size:8px;color:#ececec;font-weight:normal;">Character Movement</div><div class="t" style="left:1009.5px;top:348.4px;font-size:9.0px;color:#f0f0f0;font-weight:normal;letter-spacing:0.12px;-webkit-text-stroke:0.15px currentColor;">Get Actor Forward Vector</div><div class="t" style="left:1010.5px;top:360.6px;font-size:7.6px;color:#9cc49a;font-weight:normal;letter-spacing:0.15px;-webkit-text-stroke:0.15px currentColor;font-style:italic;">Target is Actor</div><div class="t" style="left:1013.0px;top:381.4px;font-size:7.6px;color:#e4e4e4;font-weight:normal;letter-spacing:0.15px;-webkit-text-stroke:0.15px currentColor;">Target</div><div class="box" style="left:1040.0px;top:379.2px;width:27.0px;height:12.8px;font-size:9.2px;line-height:10.8px">self</div><div class="t" style="right:325.0px;top:379.7px;font-size:7.6px;color:#e4e4e4;font-weight:normal;letter-spacing:0.15px;-webkit-text-stroke:0.15px currentColor;">Return Value</div><div class="t" style="left:1228.2px;top:375.4px;font-size:8.6px;color:#f0f0f0;font-weight:normal;letter-spacing:0.1px;">Add pin</div><div class="t" style="left:1276.4px;width:200px;text-align:center;top:316.3px;font-size:9px;color:#e8e8e8;font-weight:normal;">SET</div><div class="t" style="left:1349.5px;top:345.2px;font-size:7.6px;color:#e4e4e4;font-weight:normal;letter-spacing:0.15px;-webkit-text-stroke:0.15px currentColor;">Velocity</div><div class="t" style="left:1349.5px;top:365.3px;font-size:7.6px;color:#e4e4e4;font-weight:normal;letter-spacing:0.15px;-webkit-text-stroke:0.15px currentColor;">Target</div><div class="t" style="right:323.5px;top:416.3px;font-size:8px;color:#ececec;font-weight:normal;">Move Distance Backward</div><div class="t" style="right:186.5px;top:416.3px;font-size:8px;color:#ececec;font-weight:normal;">Character Movement</div>
<svg width="1459" height="529"><rect x="35.8" y="175" width="10" height="7" fill="#f2f2f2"/><path d="M37 177h7.6M37 180h7.6" stroke="#7a2020" stroke-width="0.9" stroke-dasharray="1 0.6"/><path d="M96.95 195.70 Q96.95 194.70 97.95 194.70 L100.51 194.70 L104.85 199.50 L100.51 204.30 L97.95 204.30 Q96.95 204.30 96.95 203.30 Z" fill="#fff"/><path d="M97.55 216.30 L100.51 216.30 L104.25 220.50 L100.51 224.70 L97.55 224.70 Z" fill="none" stroke="#fff" stroke-width="1.1" stroke-linejoin="round"/><circle cx="98.50" cy="241.50" r="2.8" fill="none" stroke="#1f63d6" stroke-width="1.6"/><path d="M102.10 239.70 L104.30 241.50 L102.10 243.30 Z" fill="#1f63d6"/><path d="M145.6 183 L148.6 175.6 M149.8 183 L152.8 175.6" stroke="#f0f0f0" stroke-width="1.5" stroke-linecap="round"/><path d="M146.95 195.70 Q146.95 194.70 147.95 194.70 L150.51 194.70 L154.85 199.50 L150.51 204.30 L147.95 204.30 Q146.95 204.30 146.95 203.30 Z" fill="#fff"/><path d="M199.45 195.70 Q199.45 194.70 200.45 194.70 L203.01 194.70 L207.35 199.50 L203.01 204.30 L200.45 204.30 Q199.45 204.30 199.45 203.30 Z" fill="#fff"/><path d="M199.45 216.70 Q199.45 215.70 200.45 215.70 L203.01 215.70 L207.35 220.50 L203.01 225.30 L200.45 225.30 Q199.45 225.30 199.45 224.30 Z" fill="#fff"/><circle cx="200.00" cy="241.50" r="2.8" fill="none" stroke="#a80c0c" stroke-width="1.6"/><path d="M203.60 239.70 L205.80 241.50 L203.60 243.30 Z" fill="#a80c0c"/><circle cx="197.20" cy="279.40" r="3.6" fill="#1ba6ea"/><path d="M200.80 277.60 L203.00 279.40 L200.80 281.20 Z" fill="#1ba6ea"/><rect x="327.5" y="98.5" width="10" height="10" fill="#8c949c" stroke="#e8e8e8" stroke-width="1.2"/><rect x="328" y="99" width="9" height="2.2" fill="#e8e8e8"/><circle cx="543.6" cy="95.4" r="8" fill="#fafafa" stroke="#222" stroke-width="1"/><path d="M543.1 90.4 L543.1 95.9 L547.6 95.9" stroke="#222" stroke-width="1.3" fill="none"/><path d="M330.45 119.70 Q330.45 118.70 331.45 118.70 L334.00 118.70 L338.35 123.50 L334.00 128.30 L331.45 128.30 Q330.45 128.30 330.45 127.30 Z" fill="#fff"/><path d="M529.45 119.70 Q529.45 118.70 530.45 118.70 L533.00 118.70 L537.35 123.50 L533.00 128.30 L530.45 128.30 Q529.45 128.30 529.45 127.30 Z" fill="#fff"/><circle cx="333.80" cy="144.70" r="3.6" fill="#1ba6ea"/><path d="M337.40 142.90 L339.60 144.70 L337.40 146.50 Z" fill="#1ba6ea"/><circle cx="333.80" cy="171.90" r="2.8" fill="none" stroke="#1ba6ea" stroke-width="1.6"/><path d="M337.40 170.10 L339.60 171.90 L337.40 173.70 Z" fill="#1ba6ea"/><path d="M406.0 175.7 L409.0 178.7 L412.0 175.7" stroke="#d0d0d0" stroke-width="1.3" fill="none"/><circle cx="423.0" cy="177.2" r="3.8" fill="none" stroke="#555" stroke-width="1"/><path d="M421.8 175.2 L424.8 177.2 L421.8 179.2 Z" fill="#555"/><circle cx="435.0" cy="176.2" r="3" fill="none" stroke="#555" stroke-width="1.2"/><path d="M437.2 178.4 L439.5 180.7" stroke="#555" stroke-width="1.5"/><circle cx="333.80" cy="202.20" r="2.8" fill="none" stroke="#3cc41a" stroke-width="1.6"/><path d="M337.40 200.40 L339.60 202.20 L337.40 204.00 Z" fill="#3cc41a"/><circle cx="333.80" cy="226.40" r="2.8" fill="none" stroke="#3cc41a" stroke-width="1.6"/><path d="M337.40 224.60 L339.60 226.40 L337.40 228.20 Z" fill="#3cc41a"/><circle cx="333.80" cy="257.00" r="2.8" fill="none" stroke="#b466e6" stroke-width="1.6"/><path d="M337.40 255.20 L339.60 257.00 L337.40 258.80 Z" fill="#b466e6"/><path d="M529.45 140.80 L532.40 140.80 L536.15 145.00 L532.40 149.20 L529.45 149.20 Z" fill="none" stroke="#fff" stroke-width="1.1" stroke-linejoin="round"/><path d="M529.45 162.10 L532.40 162.10 L536.15 166.30 L532.40 170.50 L529.45 170.50 Z" fill="none" stroke="#fff" stroke-width="1.1" stroke-linejoin="round"/><path d="M529.45 183.80 L532.40 183.80 L536.15 188.00 L532.40 192.20 L529.45 192.20 Z" fill="none" stroke="#fff" stroke-width="1.1" stroke-linejoin="round"/><path d="M529.45 205.30 L532.40 205.30 L536.15 209.50 L532.40 213.70 L529.45 213.70 Z" fill="none" stroke="#fff" stroke-width="1.1" stroke-linejoin="round"/><path d="M529.45 226.80 L532.40 226.80 L536.15 231.00 L532.40 235.20 L529.45 235.20 Z" fill="none" stroke="#fff" stroke-width="1.1" stroke-linejoin="round"/><circle cx="530.80" cy="252.50" r="2.8" fill="none" stroke="#b466e6" stroke-width="1.6"/><path d="M534.40 250.70 L536.60 252.50 L534.40 254.30 Z" fill="#b466e6"/><path d="M329.30 323.60 Q330.90 324.40 331.70 322.00 L332.90 317.60 Q333.70 315.40 335.70 316.40" stroke="#a9cbe6" stroke-width="1.2" fill="none" stroke-linecap="round"/><path d="M331.10 319.40 L334.50 319.40" stroke="#a9cbe6" stroke-width="0.9"/><path d="M330.45 346.50 Q330.45 345.50 331.45 345.50 L334.00 345.50 L338.35 350.30 L334.00 355.10 L331.45 355.10 Q330.45 355.10 330.45 354.10 Z" fill="#fff"/><path d="M514.05 346.50 Q514.05 345.50 515.05 345.50 L517.60 345.50 L521.95 350.30 L517.60 355.10 L515.05 355.10 Q514.05 355.10 514.05 354.10 Z" fill="#fff"/><circle cx="334.00" cy="373.60" r="2.8" fill="none" stroke="#1ba6ea" stroke-width="1.6"/><path d="M337.60 371.80 L339.80 373.60 L337.60 375.40 Z" fill="#1ba6ea"/><circle cx="516.00" cy="371.50" r="2.8" fill="none" stroke="#3cc41a" stroke-width="1.6"/><path d="M519.60 369.70 L521.80 371.50 L519.60 373.30 Z" fill="#3cc41a"/><circle cx="334.00" cy="404.20" r="2.8" fill="none" stroke="#1ba6ea" stroke-width="1.6"/><path d="M337.60 402.40 L339.80 404.20 L337.60 406.00 Z" fill="#1ba6ea"/><path d="M405.2 406.6 L408.2 409.6 L411.2 406.6" stroke="#d0d0d0" stroke-width="1.3" fill="none"/><circle cx="422.2" cy="408.1" r="3.8" fill="none" stroke="#555" stroke-width="1"/><path d="M421.0 406.1 L424.0 408.1 L421.0 410.1 Z" fill="#555"/><circle cx="434.2" cy="407.1" r="3" fill="none" stroke="#555" stroke-width="1.2"/><path d="M436.4 409.3 L438.7 411.6" stroke="#555" stroke-width="1.5"/><circle cx="334.00" cy="434.70" r="2.8" fill="none" stroke="#3cc41a" stroke-width="1.6"/><path d="M337.60 432.90 L339.80 434.70 L337.60 436.50 Z" fill="#3cc41a"/><circle cx="334.00" cy="463.40" r="2.8" fill="none" stroke="#b466e6" stroke-width="1.6"/><path d="M337.60 461.60 L339.80 463.40 L337.60 465.20 Z" fill="#b466e6"/><path d="M577.30 333.90 Q578.90 334.70 579.70 332.30 L580.90 327.90 Q581.70 325.70 583.70 326.70" stroke="#a9cbe6" stroke-width="1.2" fill="none" stroke-linecap="round"/><path d="M579.10 329.70 L582.50 329.70" stroke="#a9cbe6" stroke-width="0.9"/><circle cx="723.8" cy="322.3" r="8" fill="#fafafa" stroke="#222" stroke-width="1"/><path d="M723.3 317.3 L723.3 322.8 L727.8 322.8" stroke="#222" stroke-width="1.3" fill="none"/><path d="M577.65 346.50 Q577.65 345.50 578.65 345.50 L581.20 345.50 L585.55 350.30 L581.20 355.10 L578.65 355.10 Q577.65 355.10 577.65 354.10 Z" fill="#fff"/><path d="M708.75 346.50 Q708.75 345.50 709.75 345.50 L712.30 345.50 L716.65 350.30 L712.30 355.10 L709.75 355.10 Q708.75 355.10 708.75 354.10 Z" fill="#fff"/><circle cx="583.00" cy="373.60" r="2.8" fill="none" stroke="#3cc41a" stroke-width="1.6"/><path d="M586.60 371.80 L588.80 373.60 L586.60 375.40 Z" fill="#3cc41a"/><circle cx="733.0" cy="81.2" r="4.3" fill="none" stroke="#f0f0f0" stroke-width="1.2"/><path d="M733.0 78.4 L733.0 81.2 L735.0 82.7" stroke="#f0f0f0" stroke-width="1.1" fill="none"/><path d="M731.05 97.50 L734.00 97.50 L737.75 101.70 L734.00 105.90 L731.05 105.90 Z" fill="none" stroke="#fff" stroke-width="1.1" stroke-linejoin="round"/><path d="M730.45 119.40 Q730.45 118.40 731.45 118.40 L734.00 118.40 L738.35 123.20 L734.00 128.00 L731.45 128.00 Q730.45 128.00 730.45 127.00 Z" fill="#fff"/><path d="M731.05 141.00 L734.00 141.00 L737.75 145.20 L734.00 149.40 L731.05 149.40 Z" fill="none" stroke="#fff" stroke-width="1.1" stroke-linejoin="round"/><path d="M731.05 162.40 L734.00 162.40 L737.75 166.60 L734.00 170.80 L731.05 170.80 Z" fill="none" stroke="#fff" stroke-width="1.1" stroke-linejoin="round"/><path d="M731.05 184.00 L734.00 184.00 L737.75 188.20 L734.00 192.40 L731.05 192.40 Z" fill="none" stroke="#fff" stroke-width="1.1" stroke-linejoin="round"/><path d="M731.05 205.10 L734.00 205.10 L737.75 209.30 L734.00 213.50 L731.05 213.50 Z" fill="none" stroke="#fff" stroke-width="1.1" stroke-linejoin="round"/><circle cx="734.00" cy="232.70" r="2.8" fill="none" stroke="#3cc41a" stroke-width="1.6"/><path d="M737.60 230.90 L739.80 232.70 L737.60 234.50 Z" fill="#3cc41a"/><path d="M866.25 97.90 Q866.25 96.90 867.25 96.90 L869.80 96.90 L874.15 101.70 L869.80 106.50 L867.25 106.50 Q866.25 106.50 866.25 105.50 Z" fill="#fff"/><path d="M866.85 119.00 L869.80 119.00 L873.55 123.20 L869.80 127.40 L866.85 127.40 Z" fill="none" stroke="#fff" stroke-width="1.1" stroke-linejoin="round"/><circle cx="867.80" cy="144.40" r="2.8" fill="none" stroke="#138282" stroke-width="1.6"/><path d="M871.40 142.60 L873.60 144.40 L871.40 146.20 Z" fill="#138282"/><circle cx="797.0" cy="308.2" r="4.3" fill="none" stroke="#f0f0f0" stroke-width="1.2"/><path d="M797.0 305.4 L797.0 308.2 L799.0 309.7" stroke="#f0f0f0" stroke-width="1.1" fill="none"/><path d="M795.05 324.40 L798.00 324.40 L801.75 328.60 L798.00 332.80 L795.05 332.80 Z" fill="none" stroke="#fff" stroke-width="1.1" stroke-linejoin="round"/><path d="M794.45 346.30 Q794.45 345.30 795.45 345.30 L798.00 345.30 L802.35 350.10 L798.00 354.90 L795.45 354.90 Q794.45 354.90 794.45 353.90 Z" fill="#fff"/><path d="M795.05 367.50 L798.00 367.50 L801.75 371.70 L798.00 375.90 L795.05 375.90 Z" fill="none" stroke="#fff" stroke-width="1.1" stroke-linejoin="round"/><path d="M795.05 389.10 L798.00 389.10 L801.75 393.30 L798.00 397.50 L795.05 397.50 Z" fill="none" stroke="#fff" stroke-width="1.1" stroke-linejoin="round"/><path d="M795.05 410.70 L798.00 410.70 L801.75 414.90 L798.00 419.10 L795.05 419.10 Z" fill="none" stroke="#fff" stroke-width="1.1" stroke-linejoin="round"/><path d="M795.05 432.30 L798.00 432.30 L801.75 436.50 L798.00 440.70 L795.05 440.70 Z" fill="none" stroke="#fff" stroke-width="1.1" stroke-linejoin="round"/><circle cx="798.00" cy="459.90" r="2.8" fill="none" stroke="#3cc41a" stroke-width="1.6"/><path d="M801.60 458.10 L803.80 459.90 L801.60 461.70 Z" fill="#3cc41a"/><path d="M930.85 324.80 Q930.85 323.80 931.85 323.80 L934.40 323.80 L938.75 328.60 L934.40 333.40 L931.85 333.40 Q930.85 333.40 930.85 332.40 Z" fill="#fff"/><path d="M931.45 345.90 L934.40 345.90 L938.15 350.10 L934.40 354.30 L931.45 354.30 Z" fill="none" stroke="#fff" stroke-width="1.1" stroke-linejoin="round"/><circle cx="932.40" cy="370.90" r="2.8" fill="none" stroke="#138282" stroke-width="1.6"/><path d="M936.00 369.10 L938.20 370.90 L936.00 372.70 Z" fill="#138282"/><path d="M955.30 128.60 Q956.90 129.40 957.70 127.00 L958.90 122.60 Q959.70 120.40 961.70 121.40" stroke="#b8dcb0" stroke-width="1.2" fill="none" stroke-linecap="round"/><path d="M957.10 124.40 L960.50 124.40" stroke="#b8dcb0" stroke-width="0.9"/><circle cx="960.00" cy="157.00" r="2.8" fill="none" stroke="#1ba6ea" stroke-width="1.6"/><path d="M963.60 155.20 L965.80 157.00 L963.60 158.80 Z" fill="#1ba6ea"/><circle cx="1097.50" cy="155.30" r="3.6" fill="#f2b61f"/><path d="M1101.10 153.50 L1103.30 155.30 L1101.10 157.10 Z" fill="#f2b61f"/><circle cx="1176.4" cy="128" r="3.6" fill="#777" stroke="#f2b61f" stroke-width="1.5"/><circle cx="1176.4" cy="148.5" r="3.6" fill="#777" stroke="#3cc41a" stroke-width="1.5"/><circle cx="1244.6" cy="128" r="3.6" fill="#777" stroke="#f2b61f" stroke-width="1.5"/><path d="M1207.4 135.20000000000002 L1214.6 142.4 M1214.6 135.20000000000002 L1207.4 142.4" stroke="#c8c8c8" stroke-width="1.9"/><circle cx="1246.2" cy="152.8" r="4.4" fill="none" stroke="#eee" stroke-width="1.3"/><path d="M1244 152.8h4.4M1246.2 150.6v4.4" stroke="#eee" stroke-width="1.2"/><path d="M1313.85 98.20 Q1313.85 97.20 1314.85 97.20 L1317.41 97.20 L1321.75 102.00 L1317.41 106.80 L1314.85 106.80 Q1313.85 106.80 1313.85 105.80 Z" fill="#fff"/><path d="M1387.35 97.80 L1390.31 97.80 L1394.05 102.00 L1390.31 106.20 L1387.35 106.20 Z" fill="none" stroke="#fff" stroke-width="1.1" stroke-linejoin="round"/><circle cx="1317.40" cy="122.80" r="3.6" fill="#f2b61f"/><path d="M1321.00 121.00 L1323.20 122.80 L1321.00 124.60 Z" fill="#f2b61f"/><circle cx="1388.00" cy="122.80" r="2.8" fill="#222"/><circle cx="1388.00" cy="122.80" r="2.8" fill="none" stroke="#f2b61f" stroke-width="1.6"/><path d="M1391.60 121.00 L1393.80 122.80 L1391.60 124.60 Z" fill="#f2b61f"/><circle cx="1317.40" cy="142.90" r="3.6" fill="#1ba6ea"/><path d="M1321.00 141.10 L1323.20 142.90 L1321.00 144.70 Z" fill="#1ba6ea"/><circle cx="1095.50" cy="194.00" r="3.6" fill="#3cc41a"/><path d="M1099.10 192.20 L1101.30 194.00 L1099.10 195.80 Z" fill="#3cc41a"/><circle cx="1259.50" cy="194.00" r="3.6" fill="#1ba6ea"/><path d="M1263.10 192.20 L1265.30 194.00 L1263.10 195.80 Z" fill="#1ba6ea"/><path d="M998.30 356.60 Q999.90 357.40 1000.70 355.00 L1001.90 350.60 Q1002.70 348.40 1004.70 349.40" stroke="#b8dcb0" stroke-width="1.2" fill="none" stroke-linecap="round"/><path d="M1000.10 352.40 L1003.50 352.40" stroke="#b8dcb0" stroke-width="0.9"/><circle cx="1003.00" cy="385.00" r="2.8" fill="none" stroke="#1ba6ea" stroke-width="1.6"/><path d="M1006.60 383.20 L1008.80 385.00 L1006.60 386.80 Z" fill="#1ba6ea"/><circle cx="1140.50" cy="383.30" r="3.6" fill="#f2b61f"/><path d="M1144.10 381.50 L1146.30 383.30 L1144.10 385.10 Z" fill="#f2b61f"/><circle cx="1198.4" cy="355" r="3.6" fill="#777" stroke="#f2b61f" stroke-width="1.5"/><circle cx="1198.4" cy="375.5" r="3.6" fill="#777" stroke="#3cc41a" stroke-width="1.5"/><circle cx="1267.6" cy="355" r="3.6" fill="#777" stroke="#f2b61f" stroke-width="1.5"/><path d="M1229.4 362.2 L1236.6 369.40000000000003 M1236.6 362.2 L1229.4 369.40000000000003" stroke="#c8c8c8" stroke-width="1.9"/><circle cx="1268.2" cy="379.8" r="4.4" fill="none" stroke="#eee" stroke-width="1.3"/><path d="M1266 379.8h4.4M1268.2 377.6v4.4" stroke="#eee" stroke-width="1.2"/><path d="M1335.85 324.20 Q1335.85 323.20 1336.85 323.20 L1339.41 323.20 L1343.75 328.00 L1339.41 332.80 L1336.85 332.80 Q1335.85 332.80 1335.85 331.80 Z" fill="#fff"/><path d="M1409.35 323.80 L1412.31 323.80 L1416.05 328.00 L1412.31 332.20 L1409.35 332.20 Z" fill="none" stroke="#fff" stroke-width="1.1" stroke-linejoin="round"/><circle cx="1339.40" cy="348.80" r="3.6" fill="#f2b61f"/><path d="M1343.00 347.00 L1345.20 348.80 L1343.00 350.60 Z" fill="#f2b61f"/><circle cx="1410.00" cy="348.80" r="2.8" fill="#222"/><circle cx="1410.00" cy="348.80" r="2.8" fill="none" stroke="#f2b61f" stroke-width="1.6"/><path d="M1413.60 347.00 L1415.80 348.80 L1413.60 350.60 Z" fill="#f2b61f"/><circle cx="1339.40" cy="368.90" r="3.6" fill="#1ba6ea"/><path d="M1343.00 367.10 L1345.20 368.90 L1343.00 370.70 Z" fill="#1ba6ea"/><circle cx="1143.50" cy="421.00" r="3.6" fill="#3cc41a"/><path d="M1147.10 419.20 L1149.30 421.00 L1147.10 422.80 Z" fill="#3cc41a"/><circle cx="1280.50" cy="421.00" r="3.6" fill="#1ba6ea"/><path d="M1284.10 419.20 L1286.30 421.00 L1284.10 422.80 Z" fill="#1ba6ea"/></svg>
</body></html>
